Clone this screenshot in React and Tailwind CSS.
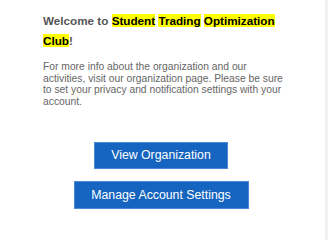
const TITLE_WORDS = ['Student', 'Trading', 'Optimization', 'Club'];

function Highlight({ children }) {
  return <span className="bg-[#ffff00] text-black">{children}</span>;
}

export default function App() {
  return (
    <div className="flex h-[240px] w-[328px] bg-white" style={{ fontFamily: '"Liberation Sans", Arial, sans-serif' }}>
      <div className="flex-1">
        <div className="ml-[43px] w-[245px] pt-[11px]">
          <h1 className="text-[11.7px] font-bold leading-[20px] text-[#555]">
            Welcome to{' '}
            {TITLE_WORDS.map((w, i) => (
              <span key={w}>
                <Highlight>{w}</Highlight>
                {i < TITLE_WORDS.length - 1 ? ' ' : ''}
              </span>
            ))}
            !
          </h1>
          <p className="mt-[10px] text-[10.3px] leading-[11.5px] text-[#666]">
            For more info about the organization and our activities, visit our organization page. Please be sure to set your privacy and notification settings with your account.
          </p>
        </div>
        <div className="mt-[35px] flex flex-col items-center gap-[12px] pr-[3px]">
          <button type="button" className="h-[27px] w-[134px] border border-[#4a8ad8] bg-[#1565c0] text-[12.3px] text-white">
            View Organization
          </button>
          <button type="button" className="h-[28px] w-[175px] border border-[#4a8ad8] bg-[#1565c0] text-[12.3px] text-white">
            Manage Account Settings
          </button>
        </div>
      </div>
      <div className="w-[3px] bg-[#f1f1f1]" />
    </div>
  );
}
